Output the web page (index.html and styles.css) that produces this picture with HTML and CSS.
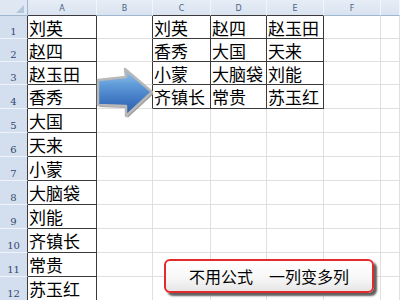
FILE: index.html
```html
<!DOCTYPE html>
<html lang="zh">
<head>
<meta charset="utf-8">
<link rel="stylesheet" href="styles.css">
</head>
<body>
<div class="sheet">
  <div class="corner"><span class="tri"></span></div>
  <div class="hd hd-t">A</div><div class="hd">B</div><div class="hd hd-t">C</div><div class="hd hd-t">D</div><div class="hd hd-t">E</div><div class="hd">F</div><div class="hd"></div>

  <div class="rn">1</div><div class="c t">刘英</div><div class="c tl"></div><div class="c t">刘英</div><div class="c t">赵四</div><div class="c t">赵玉田</div><div class="c"></div><div class="c"></div>
  <div class="rn">2</div><div class="c t">赵四</div><div class="c tl"></div><div class="c t">香秀</div><div class="c t">大国</div><div class="c t">天来</div><div class="c"></div><div class="c"></div>
  <div class="rn">3</div><div class="c t">赵玉田</div><div class="c tl"></div><div class="c t">小蒙</div><div class="c t">大脑袋</div><div class="c t">刘能</div><div class="c"></div><div class="c"></div>
  <div class="rn">4</div><div class="c t">香秀</div><div class="c tl"></div><div class="c t">齐镇长</div><div class="c t">常贵</div><div class="c t">苏玉红</div><div class="c"></div><div class="c"></div>
  <div class="rn">5</div><div class="c t">大国</div><div class="c"></div><div class="c"></div><div class="c"></div><div class="c"></div><div class="c"></div><div class="c"></div>
  <div class="rn">6</div><div class="c t">天来</div><div class="c"></div><div class="c"></div><div class="c"></div><div class="c"></div><div class="c"></div><div class="c"></div>
  <div class="rn">7</div><div class="c t">小蒙</div><div class="c"></div><div class="c"></div><div class="c"></div><div class="c"></div><div class="c"></div><div class="c"></div>
  <div class="rn">8</div><div class="c t">大脑袋</div><div class="c"></div><div class="c"></div><div class="c"></div><div class="c"></div><div class="c"></div><div class="c"></div>
  <div class="rn">9</div><div class="c t">刘能</div><div class="c"></div><div class="c"></div><div class="c"></div><div class="c"></div><div class="c"></div><div class="c"></div>
  <div class="rn">10</div><div class="c t">齐镇长</div><div class="c"></div><div class="c"></div><div class="c"></div><div class="c"></div><div class="c"></div><div class="c"></div>
  <div class="rn">11</div><div class="c t">常贵</div><div class="c"></div><div class="c"></div><div class="c"></div><div class="c"></div><div class="c"></div><div class="c"></div>
  <div class="rn">12</div><div class="c t">苏玉红</div><div class="c"></div><div class="c"></div><div class="c"></div><div class="c"></div><div class="c"></div><div class="c"></div>

  <svg class="arrow" width="60" height="54" viewBox="0 0 60 54">
    <defs>
      <linearGradient id="ag" x1="0" y1="0" x2="0" y2="1">
        <stop offset="0" stop-color="#9cc6ee"/>
        <stop offset="0.35" stop-color="#5e9ad8"/>
        <stop offset="0.7" stop-color="#3d74c0"/>
        <stop offset="1" stop-color="#2c5aa3"/>
      </linearGradient>
    </defs>
    <path d="M2 13 L30 10 L29 2 L56 25 L30 49 L30 39 L2 38 Z" fill="#9a9a9a" transform="translate(1.5 2)"/>
    <path d="M2 13 L30 10 L29 2 L56 25 L30 49 L30 39 L2 38 Z" fill="url(#ag)" stroke="#b8b8b8" stroke-width="2.5" stroke-linejoin="round"/>
  </svg>

  <div class="note">不用公式　一列变多列</div>
</div>
</body>
</html>
```

FILE: styles.css
```css
html, body {
  margin: 0;
  padding: 0;
  background: #ffffff;
  overflow: hidden;
}

.sheet {
  position: relative;
  width: 400px;
  height: 300px;
  display: grid;
  grid-template-columns: 28px 69px 56px 58px 56px 57px 57px 19px;
  grid-template-rows: 16px 23px 23px 23px 24px 24px 24px 24px 24px 24px 24px 24px 24px;
  font-family: "Noto Sans CJK SC", "Noto Sans", sans-serif;
  overflow: hidden;
}

.sheet > div {
  box-sizing: border-box;
}

.corner {
  position: relative;
  background: #dfe7f2;
  border-right: 1px solid #9eb6ce;
  border-bottom: 1px solid #9eb6ce;
}

.tri {
  position: absolute;
  right: 3px;
  bottom: 2px;
  width: 0;
  height: 0;
  border-left: 8px solid transparent;
  border-bottom: 8px solid #b4c6de;
}

.hd {
  background: linear-gradient(#e6edf6, #d9e3f0);
  border-right: 1px solid #f2f6fb;
  border-bottom: 1px solid #9eb6ce;
  color: #4c6186;
  font-family: "DejaVu Sans", sans-serif;
  font-size: 8px;
  display: flex;
  align-items: center;
  justify-content: center;
  padding-top: 1px;
}

.hd-t {
  border-bottom-color: #3a3a3a;
}

.rn {
  background: #d3dfef;
  border-right: 1px solid #3a3a3a;
  border-bottom: 1px solid #eef3fa;
  color: #34476c;
  font-family: "DejaVu Serif", serif;
  font-size: 10px;
  display: flex;
  align-items: flex-end;
  justify-content: center;
  padding-bottom: 1px;
}

.c {
  border-right: 1px solid #e2dedb;
  border-bottom: 1px solid #e2dedb;
  font-size: 17px;
  line-height: 22px;
  color: #000000;
  padding-left: 1px;
  padding-top: 1px;
  white-space: nowrap;
  overflow: hidden;
}

.t {
  border-right-color: #3a3a3a;
  border-bottom-color: #3a3a3a;
}

.tl {
  border-right-color: #3a3a3a;
}

.arrow {
  position: absolute;
  left: 96px;
  top: 67px;
}

.note {
  position: absolute;
  left: 164px;
  top: 259px;
  width: 210px;
  height: 34px;
  box-sizing: border-box;
  border: 2px solid #e42a2a;
  border-radius: 6px;
  background: linear-gradient(#ffffff, #f6f6f6 60%, #e6e6e6);
  box-shadow: 3px 3px 2px #606060;
  font-size: 16px;
  line-height: 30px;
  color: #000000;
  text-align: center;
  white-space: nowrap;
}
```
